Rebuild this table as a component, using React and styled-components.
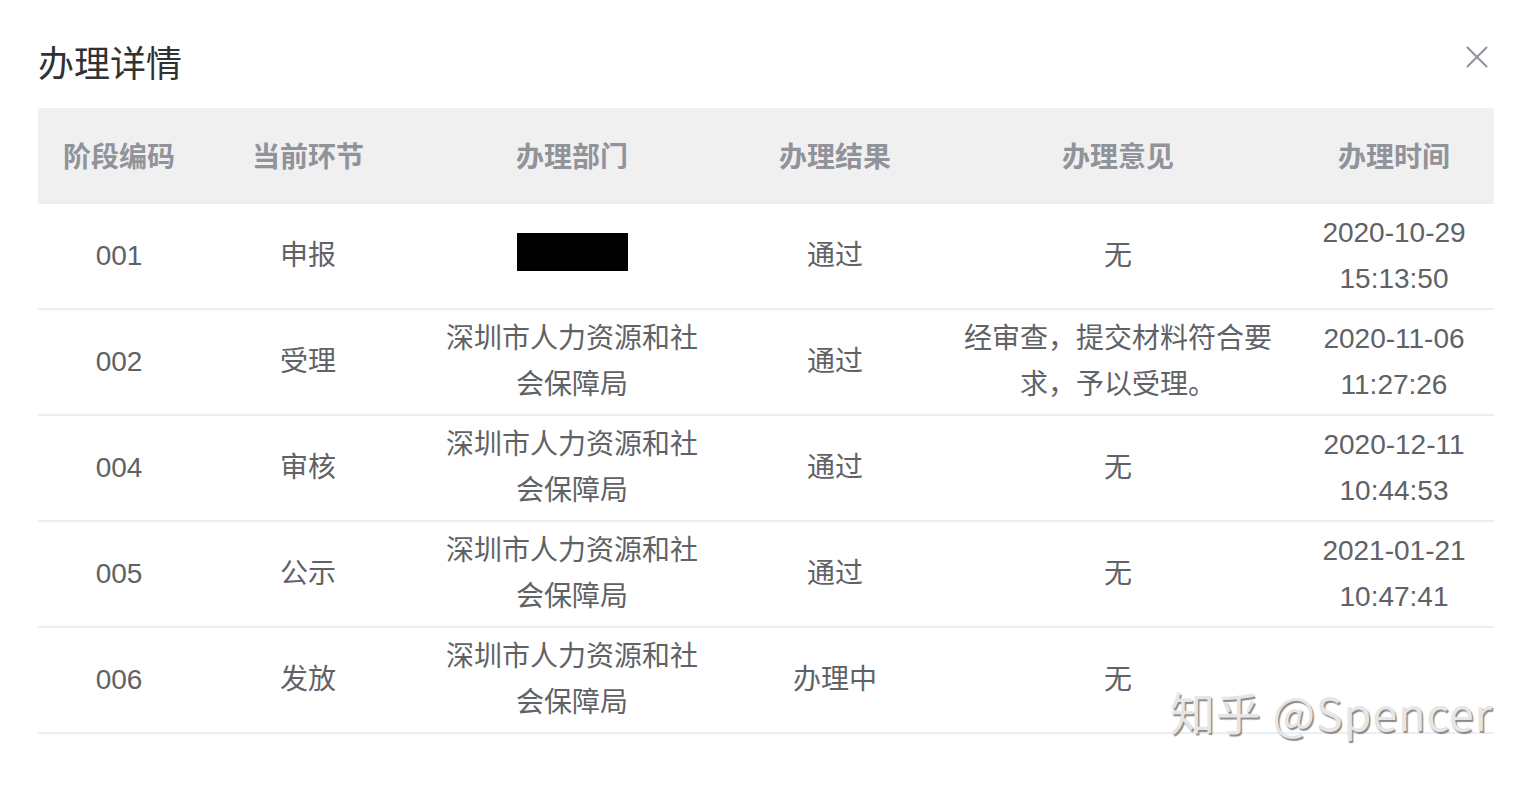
import React from "react";
import styled, { createGlobalStyle } from "styled-components";

const GlobalStyle = createGlobalStyle`
  html, body {
    margin: 0;
    padding: 0;
    background: #ffffff;
  }
  body {
    font-family: "Liberation Sans", "Noto Sans CJK SC", sans-serif;
  }
`;

const Dialog = styled.div`
  position: relative;
  width: 1530px;
  height: 786px;
  box-sizing: border-box;
  padding: 34px 36px 0 38px;
  background: #ffffff;
  overflow: hidden;
`;

const Header = styled.div`
  display: flex;
  align-items: flex-start;
  justify-content: space-between;
  height: 74px;
`;

const Title = styled.h2`
  margin: 0;
  font-family: "Noto Sans CJK SC", sans-serif;
  font-weight: 400;
  font-size: 36px;
  line-height: 54px;
  color: #303133;
`;

const CloseButton = styled.button`
  border: none;
  background: transparent;
  padding: 0;
  margin: 11px 5px 0 0;
  width: 24px;
  height: 24px;
  display: flex;
  align-items: center;
  justify-content: center;
  cursor: pointer;
  color: #909399;
`;

const Table = styled.table`
  width: 1456px;
  table-layout: fixed;
  border-collapse: collapse;
  border-spacing: 0;
`;

const HeadCell = styled.th`
  background: #f0f0f1;
  padding: 24px 20px;
  line-height: 46px;
  font-size: 28px;
  font-weight: 700;
  font-family: "Noto Sans CJK SC", sans-serif;
  color: #909399;
  text-align: center;
  border-bottom: 2px solid #ebeef2;
`;

const Cell = styled.td`
  padding: 6px 20px;
  line-height: 46px;
  font-size: 28px;
  color: #606266;
  text-align: center;
  vertical-align: middle;
  border-bottom: 2px solid #ebeef2;
  word-break: normal;
`;

const Redacted = styled.span`
  display: inline-block;
  width: 111px;
  height: 38px;
  background: #000000;
  vertical-align: top;
`;

const Watermark = styled.div`
  position: absolute;
  left: 1170px;
  top: 682px;
  font-family: "Noto Sans CJK SC", sans-serif;
  font-size: 45px;
  line-height: 60px;
  letter-spacing: 0.8px;
  color: #e6e6e6;
  text-shadow: 1.5px 1.5px 1px #8a8a8a;
  white-space: nowrap;
  pointer-events: none;
`;

const columns = [
  { title: "阶段编码", width: 162 },
  { title: "当前环节", width: 216 },
  { title: "办理部门", width: 312 },
  { title: "办理结果", width: 214 },
  { title: "办理意见", width: 352 },
  { title: "办理时间", width: 200 },
];

const DEPT = "深圳市人力资源和社会保障局";

const rows = [
  { code: "001", step: "申报", dept: null, result: "通过", opinion: "无", time: "2020-10-29 15:13:50" },
  { code: "002", step: "受理", dept: DEPT, result: "通过", opinion: "经审查，提交材料符合要求，予以受理。", time: "2020-11-06 11:27:26" },
  { code: "004", step: "审核", dept: DEPT, result: "通过", opinion: "无", time: "2020-12-11 10:44:53" },
  { code: "005", step: "公示", dept: DEPT, result: "通过", opinion: "无", time: "2021-01-21 10:47:41" },
  { code: "006", step: "发放", dept: DEPT, result: "办理中", opinion: "无", time: "" },
];

function CloseIcon() {
  return (
    <svg width="22" height="22" viewBox="0 0 22 22" fill="none">
      <path d="M1.5 1.5 L20.5 20.5 M20.5 1.5 L1.5 20.5" stroke="currentColor" strokeWidth="2" strokeLinecap="round" />
    </svg>
  );
}

export default function App() {
  return (
    <>
      <GlobalStyle />
      <Dialog>
        <Header>
          <Title>办理详情</Title>
          <CloseButton aria-label="关闭">
            <CloseIcon />
          </CloseButton>
        </Header>
        <Table>
          <colgroup>
            {columns.map((c) => (
              <col key={c.title} style={{ width: c.width }} />
            ))}
          </colgroup>
          <thead>
            <tr>
              {columns.map((c) => (
                <HeadCell key={c.title}>{c.title}</HeadCell>
              ))}
            </tr>
          </thead>
          <tbody>
            {rows.map((r) => (
              <tr key={r.code}>
                <Cell>{r.code}</Cell>
                <Cell>{r.step}</Cell>
                <Cell>{r.dept ? r.dept : <Redacted />}</Cell>
                <Cell>{r.result}</Cell>
                <Cell>{r.opinion}</Cell>
                <Cell>{r.time}</Cell>
              </tr>
            ))}
          </tbody>
        </Table>
        <Watermark>知乎 @Spencer</Watermark>
      </Dialog>
    </>
  );
}
